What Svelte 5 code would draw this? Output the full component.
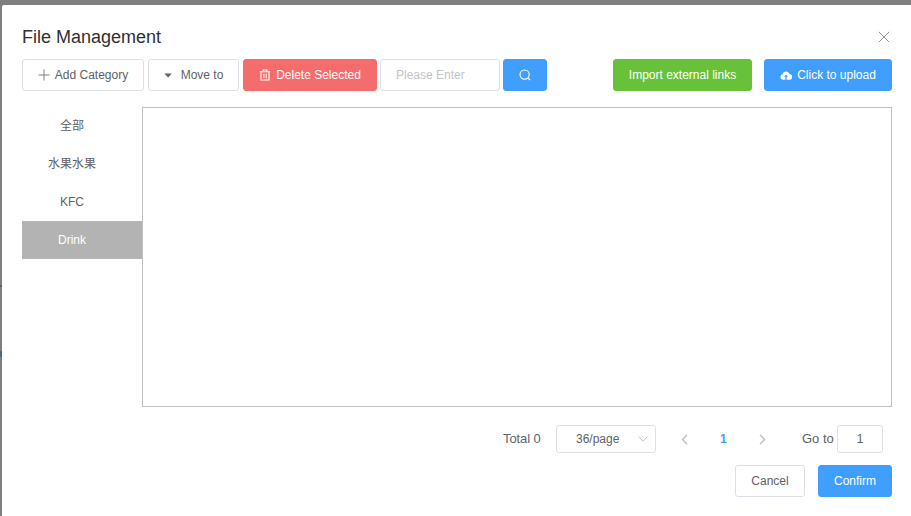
<script>
	const categories = [
		{ name: '全部', cjk: true },
		{ name: '水果水果', cjk: true },
		{ name: 'KFC', cjk: false },
		{ name: 'Drink', cjk: false }
	];
	let active = $state('Drink');
</script>

<div class="overlay">
	<span class="edge-mark first"></span>
	<span class="edge-mark second"></span>
	<div class="dialog">
		<header class="dialog-header">
			<span class="dialog-title">File Management</span>
			<button class="close" aria-label="Close">
				<svg viewBox="0 0 12 12" width="12" height="12"><path d="M.8.8l10.4 10.4M11.2.8L.8 11.2" stroke="#909399" stroke-width="1" fill="none" /></svg>
			</button>
		</header>

		<div class="toolbar">
			<button class="btn add">
				<svg viewBox="0 0 12 12" width="12" height="12"><path d="M6 .5v11M.5 6h11" stroke="#7d8085" stroke-width="1" fill="none" /></svg>
				Add Category
			</button>
			<button class="btn move">
				<svg viewBox="0 0 10 6" width="9" height="5"><path d="M0 .5h9L4.500 5.500z" fill="#606266" /></svg>
				Move to
			</button>
			<button class="btn danger">
				<svg viewBox="0 0 12 12" width="12" height="12" fill="none" stroke="#fff" stroke-width="1.100"><path d="M.8 2.800h10.400M4 2.800V1h4v1.800M2 2.800V11h8V2.800M4.800 4.800v4.400M7.200 4.800v4.400" /></svg>
				Delete Selected
			</button>
			<input class="search" placeholder="Please Enter" />
			<button class="btn primary search-btn" aria-label="Search">
				<svg viewBox="0 0 12 12" width="12" height="12" fill="none" stroke="#fff" stroke-width="1.100"><circle cx="5.600" cy="5.600" r="4.600" /><path d="M9 9l2.200 2.200" /></svg>
			</button>
			<div class="toolbar-right">
				<button class="btn success">Import external links</button>
				<button class="btn primary upload">
					<svg viewBox="0 0 12 9" width="12" height="9"><path fill="#fff" d="M3 8.800A2.800 2.800 0 0 1 2.500 3.300 3.600 3.600 0 0 1 9.400 2.900 2.950 2.950 0 0 1 9.200 8.800H6.600V5.800H8L6 3.600 4 5.800h1.400v3z" /></svg>
					Click to upload
				</button>
			</div>
		</div>

		<div class="body">
			<ul class="sidebar">
				{#each categories as item (item.name)}
					<li class:active={active === item.name}>
						<button class:cjk={item.cjk} onclick={() => (active = item.name)}>{item.name}</button>
					</li>
				{/each}
			</ul>
			<div class="files"></div>
		</div>

		<div class="pagination">
			<span class="total">Total 0</span>
			<div class="size-select">
				<span>36/page</span>
				<svg viewBox="0 0 10 6" width="10" height="6"><path d="M.5.500L5 5.200 9.500.500" fill="none" stroke="#c0c4cc" stroke-width="1" /></svg>
			</div>
			<button class="page-arrow prev" aria-label="Previous">
				<svg viewBox="0 0 7 11" width="7" height="11"><path d="M6 .8L1.500 5.500 6 10.200" fill="none" stroke="#c0c4cc" stroke-width="1.600" /></svg>
			</button>
			<span class="page-num">1</span>
			<button class="page-arrow next" aria-label="Next">
				<svg viewBox="0 0 7 11" width="7" height="11"><path d="M1 .8l4.500 4.700L1 10.200" fill="none" stroke="#c0c4cc" stroke-width="1.600" /></svg>
			</button>
			<span class="goto">Go to</span>
			<input class="page-input" value="1" />
		</div>

		<footer class="dialog-footer">
			<button class="btn cancel">Cancel</button>
			<button class="btn primary confirm">Confirm</button>
		</footer>
	</div>
</div>

<style>
	:global(body) {
		margin: 0;
		background: #7f7f7f;
		overflow: hidden;
	}

	.overlay {
		position: relative;
		height: 516px;
		padding: 5px 0 0 2px;
		box-sizing: border-box;
		overflow: hidden;
		font-family: 'Liberation Sans', 'Noto Sans CJK SC', sans-serif;
		color: #606266;
	}

	/* bits of the page showing beside the dialog */
	.edge-mark {
		position: absolute;
		left: 0;
		width: 2px;
		background: #4f6685;
	}

	.edge-mark.first {
		top: 285px;
		height: 2px;
	}

	.edge-mark.second {
		top: 351px;
		height: 6px;
	}

	.dialog {
		width: 909px;
		height: 511px;
		box-sizing: border-box;
		background: #fff;
		border-radius: 2px 0 0 0;
		padding: 20px 19px 0 20px;
	}

	.dialog-header {
		display: flex;
		justify-content: space-between;
		align-items: center;
		height: 24px;
		margin-bottom: 10px;
	}

	.dialog-title {
		font-size: 18px;
		line-height: 24px;
		color: #303133;
	}

	.close {
		border: none;
		background: none;
		padding: 0;
		width: 12px;
		height: 12px;
		margin-right: 2px;
		display: flex;
	}

	button {
		font-family: inherit;
	}

	.toolbar {
		display: flex;
		align-items: center;
		height: 32px;
	}

	.btn {
		height: 32px;
		box-sizing: border-box;
		border: 1px solid #dcdfe6;
		border-radius: 3px;
		background: #fff;
		color: #606266;
		font-size: 12px;
		padding: 0;
		display: flex;
		align-items: center;
		justify-content: center;
		gap: 5px;
	}

	.primary {
		background: #409eff;
		border-color: #409eff;
		color: #fff;
	}

	.danger {
		background: #f56c6c;
		border-color: #f56c6c;
		color: #fff;
		width: 134px;
		margin-left: 4px;
	}

	.success {
		background: #67c23a;
		border-color: #67c23a;
		color: #fff;
		width: 139px;
	}

	.add {
		width: 122px;
	}

	.move {
		width: 91px;
		margin-left: 4px;
		gap: 8px;
	}

	.search {
		width: 120px;
		height: 32px;
		box-sizing: border-box;
		margin-left: 3px;
		border: 1px solid #dcdfe6;
		border-radius: 3px;
		padding: 0 15px;
		font: 12px 'Liberation Sans', sans-serif;
		outline: none;
	}

	.search::placeholder {
		color: #c0c4cc;
		opacity: 1;
	}

	.search-btn {
		width: 44px;
		margin-left: 3px;
	}

	.toolbar-right {
		margin-left: auto;
		display: flex;
		gap: 12px;
	}

	.upload {
		width: 128px;
	}

	.body {
		display: flex;
		margin-top: 16px;
		height: 300px;
	}

	.sidebar {
		list-style: none;
		margin: 0;
		padding: 0;
		width: 120px;
		flex-shrink: 0;
	}

	.sidebar li {
		height: 38px;
	}

	.sidebar button {
		width: 100%;
		height: 100%;
		border: none;
		background: none;
		padding: 0 20px 0 0;
		font-size: 12px;
		color: #606266;
		text-align: center;
	}

	.sidebar button.cjk {
		padding-bottom: 4px;
	}

	.sidebar li.active {
		background: #b3b3b3;
	}

	.sidebar li.active button {
		color: #fff;
	}

	.files {
		flex: 1;
		border: 1px solid #c0c0c0;
	}

	.pagination {
		display: flex;
		align-items: center;
		height: 28px;
		margin-top: 18px;
		padding-left: 481px;
		font-size: 13px;
	}

	.total {
		width: 53px;
		padding-bottom: 2px;
		letter-spacing: -0.1px;
	}

	.size-select {
		width: 100px;
		height: 28px;
		box-sizing: border-box;
		border: 1px solid #dcdfe6;
		border-radius: 3px;
		display: flex;
		align-items: center;
		justify-content: space-between;
		padding: 0 7px 0 19px;
		font-size: 12px;
	}

	.page-arrow {
		width: 7px;
		height: 11px;
		border: none;
		background: none;
		padding: 0;
		display: flex;
	}

	.prev {
		margin-left: 25px;
	}

	.page-num {
		width: 7px;
		margin: 0 32px;
		font-size: 12px;
		font-weight: 700;
		color: #409eff;
	}

	.goto {
		margin-left: 36px;
		width: 35px;
		padding-bottom: 2px;
	}

	.page-input {
		width: 46px;
		height: 28px;
		box-sizing: border-box;
		border: 1px solid #dcdfe6;
		border-radius: 3px;
		padding: 0;
		text-align: center;
		font: 12px 'Liberation Sans', sans-serif;
		color: #606266;
		outline: none;
	}

	.dialog-footer {
		display: flex;
		justify-content: flex-end;
		gap: 13px;
		margin-top: 12px;
	}

	.cancel {
		width: 70px;
	}

	.confirm {
		width: 74px;
	}
</style>
